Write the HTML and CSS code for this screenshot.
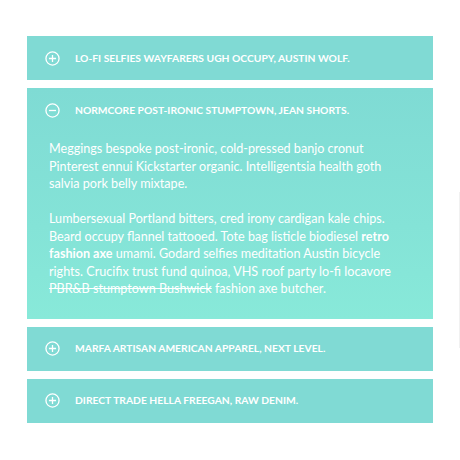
FILE: index.html
```html
<!DOCTYPE html>
<html>
<head>
<meta charset="utf-8">
<link rel="stylesheet" href="styles.css">
</head>
<body>
<div class="accordion">
  <div class="panel">
    <div class="head">
      <svg class="icon" viewBox="0 0 16 16"><circle cx="8" cy="8" r="7" fill="none" stroke="#fff" stroke-width="1.4"/><path d="M8 4.2v7.6M4.2 8h7.6" stroke="#fff" stroke-width="1.4"/></svg>
      <span>LO-FI SELFIES WAYFARERS UGH OCCUPY, AUSTIN WOLF.</span>
    </div>
  </div>
  <div class="panel open">
    <div class="head">
      <svg class="icon" viewBox="0 0 16 16"><circle cx="8" cy="8" r="7" fill="none" stroke="#fff" stroke-width="1.4"/><path d="M4.2 8h7.6" stroke="#fff" stroke-width="1.4"/></svg>
      <span>NORMCORE POST-IRONIC STUMPTOWN, JEAN SHORTS.</span>
    </div>
    <div class="body">
      <p>Meggings bespoke post-ironic, cold-pressed banjo cronut Pinterest ennui Kickstarter organic. Intelligentsia health goth salvia pork belly mixtape.</p>
      <p>Lumbersexual Portland bitters, cred irony cardigan kale chips. Beard occupy flannel tattooed. Tote bag listicle biodiesel <strong>retro fashion axe</strong> umami. Godard selfies meditation Austin bicycle rights. Crucifix trust fund quinoa, VHS roof party lo-fi locavore <s>PBR&amp;B stumptown Bushwick</s> fashion axe butcher.</p>
    </div>
  </div>
  <div class="panel">
    <div class="head">
      <svg class="icon" viewBox="0 0 16 16"><circle cx="8" cy="8" r="7" fill="none" stroke="#fff" stroke-width="1.4"/><path d="M8 4.2v7.6M4.2 8h7.6" stroke="#fff" stroke-width="1.4"/></svg>
      <span>MARFA ARTISAN AMERICAN APPAREL, NEXT LEVEL.</span>
    </div>
  </div>
  <div class="panel">
    <div class="head">
      <svg class="icon" viewBox="0 0 16 16"><circle cx="8" cy="8" r="7" fill="none" stroke="#fff" stroke-width="1.4"/><path d="M8 4.2v7.6M4.2 8h7.6" stroke="#fff" stroke-width="1.4"/></svg>
      <span>DIRECT TRADE HELLA FREEGAN, RAW DENIM.</span>
    </div>
  </div>
</div>
<div class="edge"></div>
</body>
</html>
```

FILE: styles.css
```css
html, body {
  margin: 0;
  padding: 0;
  background: #fff;
}
body {
  font-family: Lato, "Open Sans", sans-serif;
  color: #fff;
  position: relative;
  height: 460px;
}
.accordion {
  display: flex;
  flex-direction: column;
  gap: 8px;
  width: 406px;
  margin-left: 27px;
  padding-top: 36px;
}
.panel {
  background: #80dad4;
}
.panel.open {
  background: linear-gradient(to bottom, #7fdbd4 0%, #84e3d7 60%, #88e9d9 100%);
}
.head {
  height: 44px;
  display: flex;
  align-items: center;
  padding-left: 18px;
  gap: 15px;
  font-weight: 700;
  font-size: 10.3px;
}
.head span {
  margin-top: -1px;
}
.icon {
  width: 15px;
  height: 15px;
  flex: none;
}
.body {
  padding: 8px 22px 21px 22px;
  font-size: 12.6px;
  line-height: 17.5px;
}
.body p {
  margin: 0 0 17.5px 0;
}
.body p:last-child {
  margin-bottom: 0;
}
.body s {
  text-decoration: line-through;
}
.edge {
  position: absolute;
  left: 459px;
  top: 192px;
  width: 1px;
  height: 156px;
  background: #f1f1f1;
}
```
